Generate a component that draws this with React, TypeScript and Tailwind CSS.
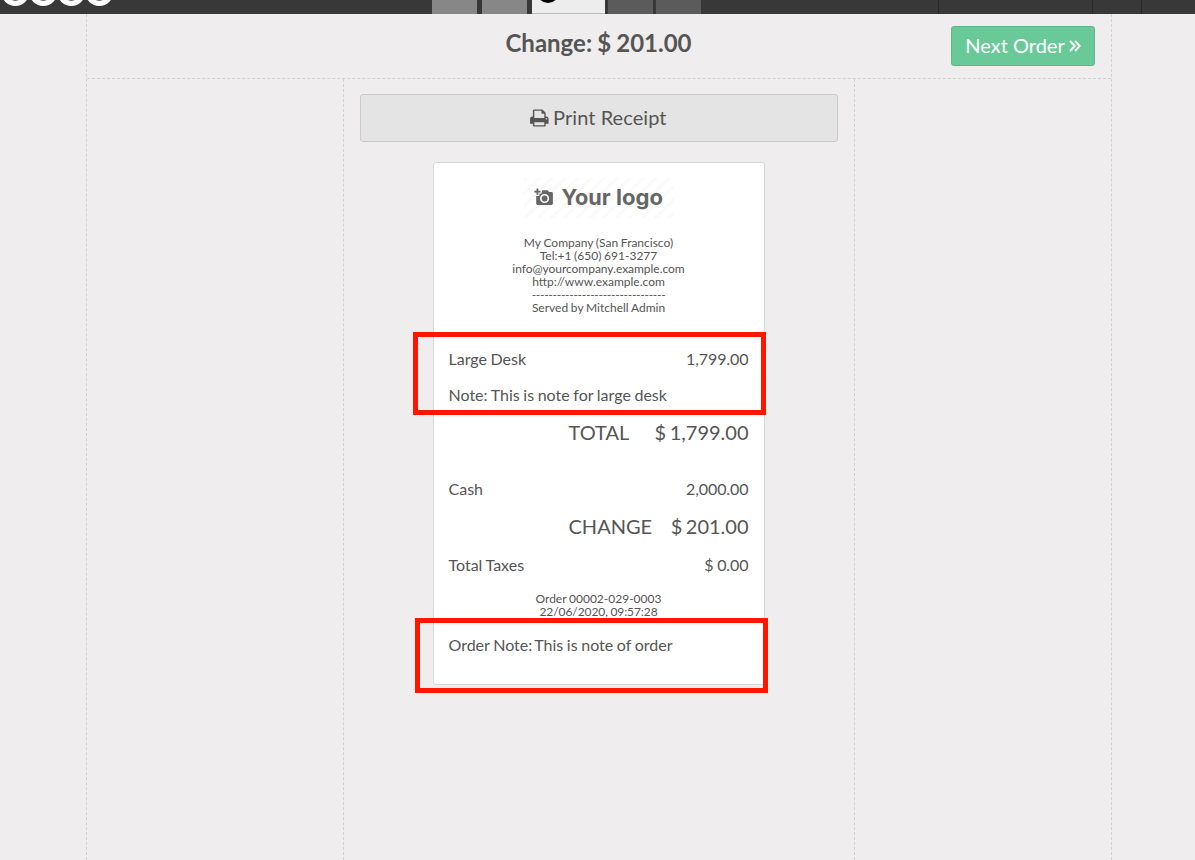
import type { ReactNode } from "react";

function PrintIcon() {
  return (
    <svg className="relative top-px" width="18.600" height="20" viewBox="0 0 1664 1792" fill="currentColor">
      <path d="M384 1536h896v-256h-896v256zM384 896h896v-384h-160q-40 0-68-28t-28-68v-160h-640v640zM1536 960q0-26-19-45t-45-19-45 19-19 45 19 45 45 19 45-19 19-45zM1664 960v416q0 13-9.500 22.500t-22.500 9.500h-224v160q0 40-28 68t-68 28h-960q-40 0-68-28t-28-68v-160h-224q-13 0-22.500-9.500t-9.500-22.500v-416q0-79 56.500-135.500t135.500-56.500h64v-544q0-40 28-68t68-28h672q40 0 88 20t76 48l152 152q28 28 48 76t20 88v256h64q79 0 135.500 56.500t56.500 135.500z" />
    </svg>
  );
}

function DoubleAngle() {
  return (
    <svg className="relative top-px" width="12" height="12" viewBox="0 0 12 12" fill="none" stroke="currentColor" strokeWidth="1.900">
      <path d="M1 1l4.700 5L1 11M6 1l4.700 5L6 11" />
    </svg>
  );
}

function Row({ left, right, className = "" }: { left: ReactNode; right?: string; className?: string }) {
  return (
    <div className={"flex h-6 items-center justify-between leading-6 [word-spacing:-0.03em] " + className}>
      <span>{left}</span>
      {right && <span className="tracking-[-0.004em]">{right}</span>}
    </div>
  );
}

function Total({ left, right }: { left: string; right: string }) {
  return (
    <div className="flex h-7 items-center justify-between pl-[120px] text-[20px] leading-7 [word-spacing:-0.08em]">
      <span>{left}</span>
      <span>{right}</span>
    </div>
  );
}

function Small({ children, className = "" }: { children: ReactNode; className?: string }) {
  return (
    <div className={"h-[13px] text-center text-[12px] leading-[13px] [word-spacing:-0.03em] " + className}>{children}</div>
  );
}

function TopBar() {
  return (
    <header className="flex h-[14px] shrink-0 overflow-hidden bg-[#383838]">
      <svg width="432" height="14" viewBox="0 0 432 14">
        {[15.3, 43.3, 71.3, 99.3].map((x) => (
          <g key={x}>
            <circle cx={x} cy="-8" r="14" fill="#fff" />
            <circle cx={x} cy="-8" r="8.700" fill="#383838" />
          </g>
        ))}
      </svg>
      <div className="w-[45px] bg-[#878787]" />
      <div className="ml-[5px] w-[45px] bg-[#878787]" />
      <div className="ml-[5px] w-[73px] border-b border-[#bbb] bg-[#ededed]">
        <svg width="73" height="13" viewBox="0 0 73 13">
          <circle cx="16" cy="-8" r="11" fill="#000" />
        </svg>
      </div>
      <div className="ml-[3px] w-[45px] bg-[#5b5b5b]" />
      <div className="ml-[3px] w-[45px] bg-[#5b5b5b]" />
      <div className="ml-auto w-[155px] border-x border-[#292929]" />
      <div className="w-[49px] border-r border-[#292929]" />
      <div className="w-[53px]" />
    </header>
  );
}

function Logo() {
  return (
    <svg className="mx-auto block" width="150" height="40" viewBox="0 0 150 40">
      <defs>
        <pattern id="hatch" width="9.200" height="9.200" patternUnits="userSpaceOnUse" patternTransform="rotate(45)">
          <rect width="3" height="9.200" fill="#fafafa" />
        </pattern>
      </defs>
      <rect width="150" height="40" fill="url(#hatch)" />
      <g fill="#666">
        <path d="M12.500 10.500h1.800v2.200h2.200v1.800h-2.200v2.200h-1.800v-2.200h-2.200v-1.800h2.200z" />
        <path
          fillRule="evenodd"
          d="M18 12.300h5.600l1.400 1.700h2.500q1.400 0 1.400 1.400v10.200q0 1.400-1.400 1.400H13.600q-1.400 0-1.400-1.400v-7.700h3.200v-2.400h2.200zM20.600 15.900a4.600 4.600 0 1 0 0 9.200a4.600 4.600 0 1 0 0-9.200zM20.600 17.600a2.900 2.900 0 1 1 0 5.800a2.900 2.900 0 1 1 0-5.800z"
        />
      </g>
      <g fill="#666" fontSize="21.500" className="font-['Inter'] font-bold">
        <text x="37.500" y="27.300" textLength="49" lengthAdjust="spacingAndGlyphs">Your</text>
        <text x="92" y="27.300" textLength="47" lengthAdjust="spacingAndGlyphs">logo</text>
      </g>
    </svg>
  );
}

export default function App() {
  return (
    <div className="relative flex h-[860px] w-[1195px] flex-col overflow-hidden bg-[#efeded] font-['Lato',sans-serif] text-[16px] text-[#555]">
      <TopBar />
      <main className="ml-[86px] flex w-[1026px] flex-1 flex-col border-x border-dashed border-[#d3d1d1]">
        <div className="grid h-[65px] shrink-0 grid-cols-[1fr_auto_1fr] border-b border-dashed border-[#d3d1d1]">
          <h1 className="col-start-2 mt-[13px] pr-px text-[24px] leading-8 font-bold [word-spacing:-0.03em]">Change: $ 201.00</h1>
          <button className="mt-3 mr-4 flex h-10 w-[144px] items-center justify-center gap-[4px] justify-self-end rounded-[3px] border border-[#5fb78a] bg-[#6ac999] pb-[2px] text-[20px] text-white">
            Next Order
            <DoubleAngle />
          </button>
        </div>
        <div className="mx-auto w-[512px] flex-1 border-x border-dashed border-[#d3d1d1] px-4 pt-[15px]">
          <button className="flex h-12 w-full items-center justify-center gap-1 rounded-[3px] border border-[#cacaca] bg-[#e4e4e4] pr-px pb-[2px] text-[20px] tracking-[0.070px]">
            <PrintIcon />
            Print Receipt
          </button>
          <article className="mx-auto mt-5 h-[523px] w-[332px] rounded-[3px] border border-[#d8d8d8] bg-white pt-[15px] pr-[15.500px] pl-[14.500px]">
            <Logo />
            <div className="mt-[18px]">
              <Small>My Company (San Francisco)</Small>
              <Small>Tel:+1 (650) 691-3277</Small>
              <Small className="tracking-[-0.030px]">info@yourcompany.example.com</Small>
              <Small>http://www.example.com</Small>
              <Small className="tracking-[-0.280px]">--------------------------------</Small>
              <Small>Served by Mitchell Admin</Small>
            </div>
            <Row className="mt-[33px]" left="Large Desk" right="1,799.00" />
            <Row className="mt-3" left="Note: This is note for large desk" />
            <div className="mt-[7px] ml-auto h-px w-[43px] border-t border-dashed border-[#ddd]" />
            <div className="mt-[3px]">
              <Total left="TOTAL" right="$ 1,799.00" />
            </div>
            <Row className="mt-[31px]" left="Cash" right="2,000.00" />
            <div className="mt-[11px]">
              <Total left="CHANGE" right="$ 201.00" />
            </div>
            <Row className="mt-[13px]" left="Total Taxes" right="$ 0.00" />
            <div className="mt-[15px]">
              <Small>Order 00002-029-0003</Small>
              <Small className="tracking-[-0.080px]">22/06/2020, 09:57:28</Small>
            </div>
            <Row
              className="mt-[15px]"
              left={
                <>
                  <span className="mr-[2px]">Order Note:</span>
                  <span>This is note of order</span>
                </>
              }
            />
          </article>
        </div>
      </main>
      <div className="absolute top-[332px] left-[413px] h-[83px] w-[353px] border-[5px] border-[#ff1500]" />
      <div className="absolute top-[618px] left-[415px] h-[75px] w-[353px] border-[5px] border-[#ff1500]" />
    </div>
  );
}
